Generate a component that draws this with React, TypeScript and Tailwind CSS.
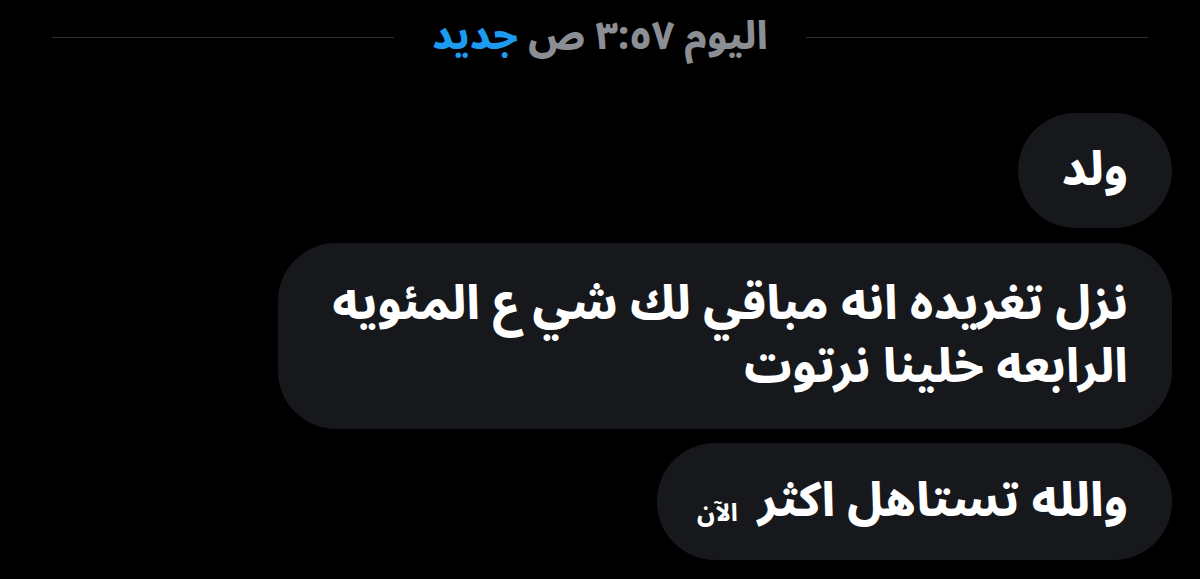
import React from 'react';

const Bubble: React.FC<{ children: React.ReactNode; className?: string }> = ({ children, className }) => (
  <div className={`bg-[#16181c] rounded-[58px] pr-[44px] text-white text-[47px] font-extrabold leading-[63px] ${className ?? 'py-[27px] pl-[44px]'}`}>
    {children}
  </div>
);

const App: React.FC = () => {
  return (
    <div
      dir="rtl"
      className="w-[1200px] h-[579px] bg-black overflow-hidden"
      style={{ fontFamily: '"Noto Sans Arabic", "DejaVu Sans", sans-serif' }}
    >
      <div className="flex items-center gap-[38px] px-[52px] h-[74px]">
        <div className="flex-1 h-px bg-[#2f3336]" />
        <div className="text-[39px] font-extrabold text-[#8b8f94] whitespace-nowrap leading-[1.7]">
          اليوم ٣:٥٧ ص <span className="text-[#1d9bf0]">جديد</span>
        </div>
        <div className="flex-1 h-px bg-[#2f3336]" />
      </div>

      <div className="flex flex-col items-start pr-[28px] mt-[39px]">
        <Bubble className="py-[26px] pl-[44px]">ولد</Bubble>
        <Bubble className="py-[30px] pl-[54px] mt-[15px]">
          نزل تغريده انه مباقي لك شي ع المئويه
          <br />
          الرابعه خلينا نرتوت
        </Bubble>
        <Bubble className="py-[27px] pl-[40px] mt-[14px]">
          <div className="flex items-center gap-[20px]">
            <span>والله تستاهل اكثر</span>
            <span className="text-[24px] leading-none mt-[24px]">الآن</span>
          </div>
        </Bubble>
      </div>
    </div>
  );
};

export default App;
